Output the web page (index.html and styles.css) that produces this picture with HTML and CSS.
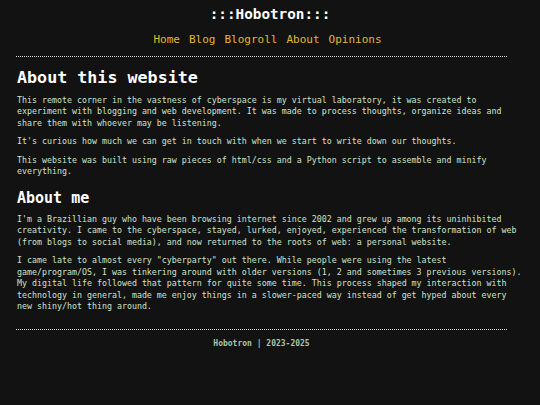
FILE: index.html
```html
<!DOCTYPE html>
<html lang="en">
<head>
<meta charset="utf-8">
<title>About - Hobotron</title>
<link rel="stylesheet" href="styles.css">
</head>
<body>
<header class="site-header">
  <div class="site-title">:::Hobotron:::</div>
  <nav class="site-nav">
    <a href="#">Home</a>
    <a href="#">Blog</a>
    <a href="#">Blogroll</a>
    <a href="#">About</a>
    <a href="#">Opinions</a>
  </nav>
</header>
<div class="wrap">
  <hr class="rule rule-top">
  <main class="content">
    <h1 class="h1">About this website</h1>
    <p class="p">This remote corner in the vastness of cyberspace is my virtual laboratory, it was created to experiment with blogging and web development. It was made to process thoughts, organize ideas and share them with whoever may be listening.</p>
    <p class="p">It's curious how much we can get in touch with when we start to write down our thoughts.</p>
    <p class="p">This website was built using raw pieces of html/css and a Python script to assemble and minify everything.</p>
    <h2 class="h2">About me</h2>
    <p class="p">I'm a Brazillian guy who have been browsing internet since 2002 and grew up among its uninhibited creativity. I came to the cyberspace, stayed, lurked, enjoyed, experienced the transformation of web (from blogs to social media), and now returned to the roots of web: a personal website.</p>
    <p class="p">I came late to almost every "cyberparty" out there. While people were using the latest game/program/OS, I was tinkering around with older versions (1, 2 and sometimes 3 previous versions). My digital life followed that pattern for quite some time. This process shaped my interaction with technology in general, made me enjoy things in a slower-paced way instead of get hyped about every new shiny/hot thing around.</p>
  </main>
  <hr class="rule">
  <footer class="site-footer">Hobotron | 2023-2025</footer>
</div>
</body>
</html>
```

FILE: styles.css
```css
html, body {
  margin: 0;
  padding: 0;
  background: #121212;
}
body {
  font-family: "DejaVu Sans Mono", "Liberation Mono", monospace;
  color: #cde2cb;
}
.site-header {
  display: flex;
  flex-direction: column;
  align-items: center;
  padding-top: 5px;
}
.site-title {
  font-size: 14.3px;
  line-height: 18px;
  color: #ffffff;
  font-weight: bold;
}
.site-nav {
  display: flex;
  gap: 9px;
  margin-top: 10px;
  margin-left: -5px;
  font-size: 11px;
  line-height: 14px;
}
.site-nav a {
  color: #e3b82c;
  text-decoration: none;
}
.wrap {
  width: 491px;
  margin-left: 16px;
}
.rule {
  border: 0;
  border-top: 1px dotted #d8e0d8;
  margin: 0;
  height: 0;
}
.rule-top {
  margin-top: 9px;
}
.content {
  padding-top: 10px;
  padding-bottom: 16px;
}
.h1 {
  font-size: 16.7px;
  line-height: 20px;
  color: #ffffff;
  margin: 0 0 7.5px 0;
  padding-left: 1px;
}
.h2 {
  font-size: 15px;
  line-height: 18px;
  color: #ffffff;
  margin: 11px 0 7px 0;
  padding-left: 1px;
}
.p {
  font-size: 8.3px;
  line-height: 11.5px;
  width: 101.5ch;
  margin: 0 0 7px 0;
  padding-left: 1px;
}
.p:last-child {
  margin-bottom: 0;
}
.site-footer {
  text-align: center;
  font-size: 8px;
  line-height: 12px;
  color: #a9c2a8;
  font-weight: bold;
  margin-top: 8px;
}
```
